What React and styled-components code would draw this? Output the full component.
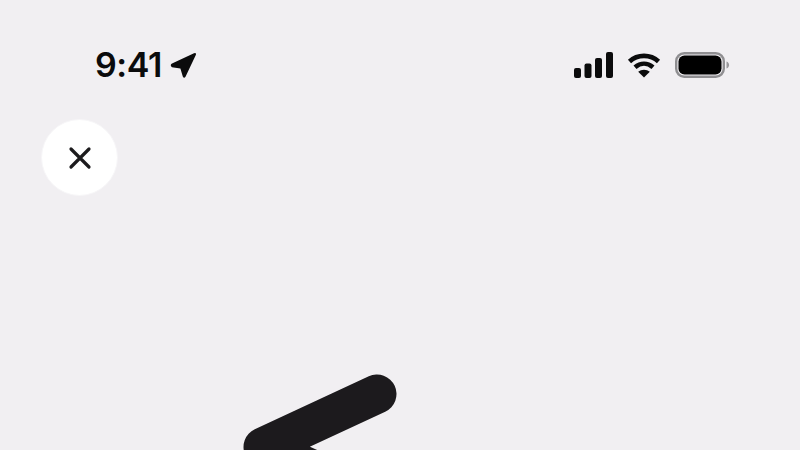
import React from "react";
import styled, { createGlobalStyle } from "styled-components";

const Global = createGlobalStyle`
  html, body { margin: 0; padding: 0; background: #f1eff2; }
`;

const Page = styled.div`
  width: 800px;
  height: 450px;
  overflow: hidden;
  background: #f1eff2;
  display: flex;
  flex-direction: column;
  align-items: flex-start;
`;

const StatusBar = styled.div`
  box-sizing: border-box;
  flex: none;
  width: 800px;
  height: 119px;
  padding: 46px 70px 0 95px;
  display: flex;
  justify-content: space-between;
  align-items: flex-start;
`;

const TimeGroup = styled.div`
  display: flex;
  align-items: center;
  gap: 8px;
  height: 38px;
`;

const Time = styled.span`
  font-family: Inter, "Liberation Sans", sans-serif;
  font-size: 34px;
  font-weight: 600;
  line-height: 38px;
  letter-spacing: -0.4px;
  color: #0b0b0c;
`;

const StatusIcons = styled.div`
  display: flex;
  align-items: center;
  gap: 14px;
  height: 38px;
`;

const CloseButton = styled.button`
  box-sizing: border-box;
  flex: none;
  width: 77px;
  height: 77px;
  margin-left: 41px;
  padding: 0;
  border: 1px solid #f7f6f8;
  border-radius: 50%;
  background: #ffffff;
  display: flex;
  align-items: center;
  justify-content: center;
`;

const Stroke = styled.svg`
  display: block;
  flex: none;
  margin: 177px 0 0 230px;
`;

export default function App() {
  return (
    <Page>
      <Global />
      <StatusBar>
        <TimeGroup>
          <Time>9:41</Time>
          <svg width="27" height="27" viewBox="0 0 27 27">
            <path d="M2 11.500 24 1.200Q26.600.400 25.800 3L15.500 24.800Q14 27 12.800 24.500L10.400 16.400 2 15.200Q-.500 13 2 11.500Z" fill="#0b0b0c" />
          </svg>
        </TimeGroup>
        <StatusIcons>
          <svg width="39" height="26" viewBox="0 0 39 26" fill="#0b0b0c">
            <rect x="0" y="16" width="7" height="10" rx="2" />
            <rect x="10.500" y="11.500" width="7" height="14.500" rx="2" />
            <rect x="21" y="6" width="7" height="20" rx="2" />
            <rect x="32" y="0" width="7" height="26" rx="2" />
          </svg>
          <svg width="34" height="26" viewBox="0 0 34 26" fill="none" stroke="#0b0b0c" strokeWidth="4.600">
            <path d="M2.500 9.500C10.500 2 23.500 2 31.500 9.500" />
            <path d="M8 15.200C13.500 10.500 20.500 10.500 26 15.200" />
            <path d="M17 25.500 11.200 19.800C14.500 17 19.500 17 22.800 19.800Z" fill="#0b0b0c" stroke="none" />
          </svg>
          <svg width="55" height="26" viewBox="0 0 55 26">
            <rect x="1.200" y="1.200" width="47.600" height="23.600" rx="8" fill="none" stroke="#8f8e91" strokeWidth="2.400" />
            <rect x="3.500" y="3.500" width="43" height="19" rx="6" fill="#000" />
            <path d="M51.500 9.500c1.800.6 2.600 2 2.600 3.500s-.8 2.900-2.600 3.500Z" fill="#9a999c" />
          </svg>
        </StatusIcons>
      </StatusBar>
      <CloseButton aria-label="Close">
        <svg width="24" height="24" viewBox="0 0 24 24" fill="none" stroke="#1c1b1d" strokeWidth="3.200" strokeLinecap="round">
          <path d="M3 3 21 21M21 3 3 21" />
        </svg>
      </CloseButton>
      <Stroke width="180" height="90" viewBox="0 0 180 90">
        <path d="M147 21 33 74 133 119" fill="none" stroke="#1c1a1d" strokeWidth="39" strokeLinecap="round" strokeLinejoin="round" />
      </Stroke>
    </Page>
  );
}
